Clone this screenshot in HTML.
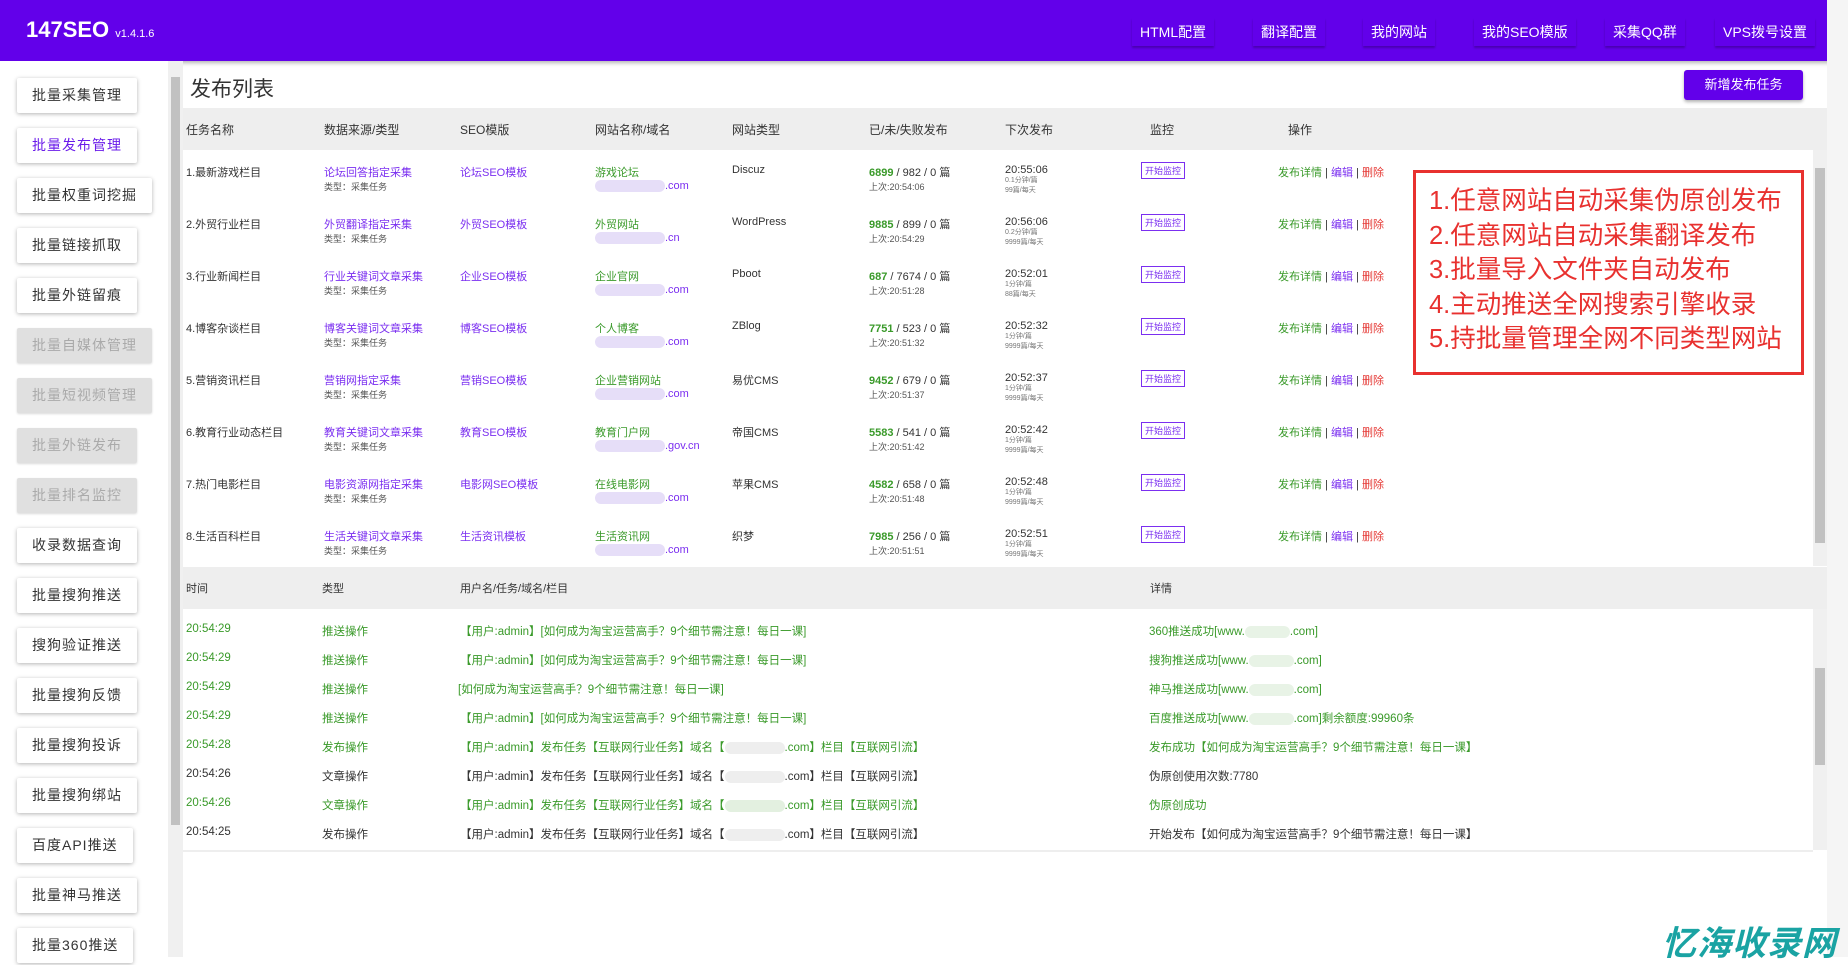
<!DOCTYPE html>
<html><head><meta charset="utf-8">
<style>
*{margin:0;padding:0;box-sizing:border-box}
body{width:1848px;height:957px;overflow:hidden;background:#fff;font-family:"Liberation Sans","Noto Sans CJK SC",sans-serif;font-size:12px;color:#333;position:relative}
.hdr{position:absolute;left:0;top:0;width:1848px;height:61px;background:#6200ea;box-shadow:0 2px 4px rgba(0,0,0,.3)}
.logo{position:absolute;left:26px;top:17px;color:#fff;font-size:22px;font-weight:bold}
.logo small{font-size:11px;font-weight:normal}
.nav{position:absolute;top:18px;color:#fff;font-size:14px;padding:4px 8px;box-shadow:0 2px 2px rgba(0,0,0,.25)}
.side{position:absolute;left:0;top:61px;width:168px;height:896px;background:#fff}
.sb{position:absolute;left:17px;height:35px;line-height:35px;padding:0 15px;background:#fff;box-shadow:0 1px 4px rgba(0,0,0,.3);border-radius:2px;font-size:14px;letter-spacing:1px;color:#333}
.sb.dis{background:#e0e0e0;color:#aaa;box-shadow:0 1px 2px rgba(0,0,0,.15)}
.sb.act{color:#6a1bea}
.vs{position:absolute;background:#f0f0f0}
.thumb{position:absolute;background:#c1c1c1}
.title{position:absolute;left:190px;top:73px;font-size:21px;color:#333}
.newbtn{position:absolute;left:1684px;top:70px;width:119px;height:30px;background:#6200ea;color:#fff;font-size:13px;line-height:30px;text-align:center;border-radius:3px;box-shadow:0 2px 3px rgba(0,0,0,.3)}
.band{position:absolute;left:183px;width:1644px;background:#eee}
.th{position:absolute;font-size:12px;color:#333}
.row{position:absolute;left:183px;width:1630px;height:52px}
.c{position:absolute;font-size:11px;white-space:nowrap}
.p{color:#7b2ff0}.g{color:#3a9a2a}.r{color:#e53935}
.s{font-size:9px;color:#555}
.xs{font-size:7px;color:#777;line-height:10px}
.blur{display:inline-block;width:70px;height:12px;background:#e6def8;vertical-align:middle;border-radius:6px}
.mon{position:absolute;left:958px;top:-2px;border:1px solid #7b2ff0;color:#7b2ff0;font-size:9px;padding:1px 3px}
.lr{position:absolute;left:183px;width:1630px;height:29px;font-size:11.5px}
.lr span{position:absolute;top:0;white-space:nowrap}
.red{position:absolute;left:1413px;top:170px;width:391px;height:205px;border:3px solid #e8312f;background:#fff;padding:11px 0 0 13px;color:#e8312f;font-size:25.5px;line-height:34.5px;white-space:nowrap}
.wm{position:absolute;left:1662px;top:916px;font-size:34px;font-weight:bold;font-style:italic;color:#1aa3a3;letter-spacing:1px}
</style></head><body>
<div class="hdr">
<div class="logo">147SEO <small>v1.4.1.6</small></div>
<div class="nav" style="left:1132px">HTML配置</div>
<div class="nav" style="left:1253px">翻译配置</div>
<div class="nav" style="left:1363px">我的网站</div>
<div class="nav" style="left:1474px">我的SEO模版</div>
<div class="nav" style="left:1605px">采集QQ群</div>
<div class="nav" style="left:1715px">VPS拨号设置</div>
</div>
<div class="side">
<div class="sb" style="top:17px">批量采集管理</div>
<div class="sb act" style="top:67px">批量发布管理</div>
<div class="sb" style="top:117px">批量权重词挖掘</div>
<div class="sb" style="top:167px">批量链接抓取</div>
<div class="sb" style="top:217px">批量外链留痕</div>
<div class="sb dis" style="top:267px">批量自媒体管理</div>
<div class="sb dis" style="top:317px">批量短视频管理</div>
<div class="sb dis" style="top:367px">批量外链发布</div>
<div class="sb dis" style="top:417px">批量排名监控</div>
<div class="sb" style="top:467px">收录数据查询</div>
<div class="sb" style="top:517px">批量搜狗推送</div>
<div class="sb" style="top:567px">搜狗验证推送</div>
<div class="sb" style="top:617px">批量搜狗反馈</div>
<div class="sb" style="top:667px">批量搜狗投诉</div>
<div class="sb" style="top:717px">批量搜狗绑站</div>
<div class="sb" style="top:767px">百度API推送</div>
<div class="sb" style="top:817px">批量神马推送</div>
<div class="sb" style="top:867px">批量360推送</div>
</div>
<div class="vs" style="left:168px;top:61px;width:15px;height:896px"></div>
<div class="thumb" style="left:171px;top:77px;width:9px;height:748px"></div>
<div class="vs" style="left:1827px;top:0;width:21px;height:957px;background:#f5f5f5"></div>
<div class="title">发布列表</div>
<div class="newbtn">新增发布任务</div>
<div class="band" style="top:108px;height:42px"></div>
<div class="th" style="left:186px;top:121px">任务名称</div>
<div class="th" style="left:324px;top:121px">数据来源/类型</div>
<div class="th" style="left:460px;top:121px">SEO模版</div>
<div class="th" style="left:595px;top:121px">网站名称/域名</div>
<div class="th" style="left:732px;top:121px">网站类型</div>
<div class="th" style="left:869px;top:121px">已/未/失败发布</div>
<div class="th" style="left:1005px;top:121px">下次发布</div>
<div class="th" style="left:1150px;top:121px">监控</div>
<div class="th" style="left:1288px;top:121px">操作</div>
<div class="vs" style="left:1813px;top:150px;width:14px;height:416px"></div>
<div class="thumb" style="left:1815px;top:168px;width:10px;height:375px"></div>

<div class="row" style="top:164px"><div class="c" style="left:3px">1.最新游戏栏目</div><div class="c p" style="left:141px">论坛回答指定采集<br><span class="s">类型：采集任务</span></div><div class="c p" style="left:277px">论坛SEO模板</div><div class="c g" style="left:412px">游戏论坛<br><span class="blur"></span><span class="p">.com</span></div><div class="c" style="left:549px">Discuz</div><div class="c" style="left:686px"><b class="g">6899</b> / 982 / 0 篇<br><span class="s">上次:20:54:06</span></div><div class="c" style="left:822px">20:55:06<div class="xs">0.1分钟/篇<br>99篇/每天</div></div><div class="mon">开始监控</div><div class="c" style="left:1095px"><span class="g">发布详情</span> | <span class="p">编辑</span> | <span class="r">删除</span></div></div>
<div class="row" style="top:216px"><div class="c" style="left:3px">2.外贸行业栏目</div><div class="c p" style="left:141px">外贸翻译指定采集<br><span class="s">类型：采集任务</span></div><div class="c p" style="left:277px">外贸SEO模板</div><div class="c g" style="left:412px">外贸网站<br><span class="blur"></span><span class="p">.cn</span></div><div class="c" style="left:549px">WordPress</div><div class="c" style="left:686px"><b class="g">9885</b> / 899 / 0 篇<br><span class="s">上次:20:54:29</span></div><div class="c" style="left:822px">20:56:06<div class="xs">0.2分钟/篇<br>9999篇/每天</div></div><div class="mon">开始监控</div><div class="c" style="left:1095px"><span class="g">发布详情</span> | <span class="p">编辑</span> | <span class="r">删除</span></div></div>
<div class="row" style="top:268px"><div class="c" style="left:3px">3.行业新闻栏目</div><div class="c p" style="left:141px">行业关键词文章采集<br><span class="s">类型：采集任务</span></div><div class="c p" style="left:277px">企业SEO模板</div><div class="c g" style="left:412px">企业官网<br><span class="blur"></span><span class="p">.com</span></div><div class="c" style="left:549px">Pboot</div><div class="c" style="left:686px"><b class="g">687</b> / 7674 / 0 篇<br><span class="s">上次:20:51:28</span></div><div class="c" style="left:822px">20:52:01<div class="xs">1分钟/篇<br>88篇/每天</div></div><div class="mon">开始监控</div><div class="c" style="left:1095px"><span class="g">发布详情</span> | <span class="p">编辑</span> | <span class="r">删除</span></div></div>
<div class="row" style="top:320px"><div class="c" style="left:3px">4.博客杂谈栏目</div><div class="c p" style="left:141px">博客关键词文章采集<br><span class="s">类型：采集任务</span></div><div class="c p" style="left:277px">博客SEO模板</div><div class="c g" style="left:412px">个人博客<br><span class="blur"></span><span class="p">.com</span></div><div class="c" style="left:549px">ZBlog</div><div class="c" style="left:686px"><b class="g">7751</b> / 523 / 0 篇<br><span class="s">上次:20:51:32</span></div><div class="c" style="left:822px">20:52:32<div class="xs">1分钟/篇<br>9999篇/每天</div></div><div class="mon">开始监控</div><div class="c" style="left:1095px"><span class="g">发布详情</span> | <span class="p">编辑</span> | <span class="r">删除</span></div></div>
<div class="row" style="top:372px"><div class="c" style="left:3px">5.营销资讯栏目</div><div class="c p" style="left:141px">营销网指定采集<br><span class="s">类型：采集任务</span></div><div class="c p" style="left:277px">营销SEO模板</div><div class="c g" style="left:412px">企业营销网站<br><span class="blur"></span><span class="p">.com</span></div><div class="c" style="left:549px">易优CMS</div><div class="c" style="left:686px"><b class="g">9452</b> / 679 / 0 篇<br><span class="s">上次:20:51:37</span></div><div class="c" style="left:822px">20:52:37<div class="xs">1分钟/篇<br>9999篇/每天</div></div><div class="mon">开始监控</div><div class="c" style="left:1095px"><span class="g">发布详情</span> | <span class="p">编辑</span> | <span class="r">删除</span></div></div>
<div class="row" style="top:424px"><div class="c" style="left:3px">6.教育行业动态栏目</div><div class="c p" style="left:141px">教育关键词文章采集<br><span class="s">类型：采集任务</span></div><div class="c p" style="left:277px">教育SEO模板</div><div class="c g" style="left:412px">教育门户网<br><span class="blur"></span><span class="p">.gov.cn</span></div><div class="c" style="left:549px">帝国CMS</div><div class="c" style="left:686px"><b class="g">5583</b> / 541 / 0 篇<br><span class="s">上次:20:51:42</span></div><div class="c" style="left:822px">20:52:42<div class="xs">1分钟/篇<br>9999篇/每天</div></div><div class="mon">开始监控</div><div class="c" style="left:1095px"><span class="g">发布详情</span> | <span class="p">编辑</span> | <span class="r">删除</span></div></div>
<div class="row" style="top:476px"><div class="c" style="left:3px">7.热门电影栏目</div><div class="c p" style="left:141px">电影资源网指定采集<br><span class="s">类型：采集任务</span></div><div class="c p" style="left:277px">电影网SEO模板</div><div class="c g" style="left:412px">在线电影网<br><span class="blur"></span><span class="p">.com</span></div><div class="c" style="left:549px">苹果CMS</div><div class="c" style="left:686px"><b class="g">4582</b> / 658 / 0 篇<br><span class="s">上次:20:51:48</span></div><div class="c" style="left:822px">20:52:48<div class="xs">1分钟/篇<br>9999篇/每天</div></div><div class="mon">开始监控</div><div class="c" style="left:1095px"><span class="g">发布详情</span> | <span class="p">编辑</span> | <span class="r">删除</span></div></div>
<div class="row" style="top:528px"><div class="c" style="left:3px">8.生活百科栏目</div><div class="c p" style="left:141px">生活关键词文章采集<br><span class="s">类型：采集任务</span></div><div class="c p" style="left:277px">生活资讯模板</div><div class="c g" style="left:412px">生活资讯网<br><span class="blur"></span><span class="p">.com</span></div><div class="c" style="left:549px">织梦</div><div class="c" style="left:686px"><b class="g">7985</b> / 256 / 0 篇<br><span class="s">上次:20:51:51</span></div><div class="c" style="left:822px">20:52:51<div class="xs">1分钟/篇<br>9999篇/每天</div></div><div class="mon">开始监控</div><div class="c" style="left:1095px"><span class="g">发布详情</span> | <span class="p">编辑</span> | <span class="r">删除</span></div></div>

<div class="red">1.任意网站自动采集伪原创发布<br>2.任意网站自动采集翻译发布<br>3.批量导入文件夹自动发布<br>4.主动推送全网搜索引擎收录<br>5.持批量管理全网不同类型网站</div>

<div class="band" style="top:567px;height:42px"></div>
<div class="th" style="left:186px;top:580px;font-size:11px">时间</div>
<div class="th" style="left:322px;top:580px;font-size:11px">类型</div>
<div class="th" style="left:460px;top:580px;font-size:11px">用户名/任务/域名/栏目</div>
<div class="th" style="left:1150px;top:580px;font-size:11px">详情</div>
<div class="vs" style="left:1813px;top:609px;width:14px;height:241px"></div>
<div class="thumb" style="left:1815px;top:668px;width:10px;height:97px"></div>
<div style="position:absolute;left:183px;top:850px;width:1630px;height:2px;background:#eee"></div>

<div class="lr g" style="top:623px"><span style="left:3px">20:54:29</span><span style="left:139px">推送操作</span><span style="left:277px">【用户:admin】[如何成为淘宝运营高手？9个细节需注意！每日一课]</span><span style="left:966px">360推送成功[www.<span class="blur" style="position:static;width:45px;background:#e8f3e6"></span>.com]</span></div>
<div class="lr g" style="top:652px"><span style="left:3px">20:54:29</span><span style="left:139px">推送操作</span><span style="left:277px">【用户:admin】[如何成为淘宝运营高手？9个细节需注意！每日一课]</span><span style="left:966px">搜狗推送成功[www.<span class="blur" style="position:static;width:45px;background:#e8f3e6"></span>.com]</span></div>
<div class="lr g" style="top:681px"><span style="left:3px">20:54:29</span><span style="left:139px">推送操作</span><span style="left:275px">[如何成为淘宝运营高手？9个细节需注意！每日一课]</span><span style="left:966px">神马推送成功[www.<span class="blur" style="position:static;width:45px;background:#e8f3e6"></span>.com]</span></div>
<div class="lr g" style="top:710px"><span style="left:3px">20:54:29</span><span style="left:139px">推送操作</span><span style="left:277px">【用户:admin】[如何成为淘宝运营高手？9个细节需注意！每日一课]</span><span style="left:966px">百度推送成功[www.<span class="blur" style="position:static;width:45px;background:#e8f3e6"></span>.com]剩余额度:99960条</span></div>
<div class="lr g" style="top:739px"><span style="left:3px">20:54:28</span><span style="left:139px">发布操作</span><span style="left:277px">【用户:admin】发布任务【互联网行业任务】域名【<span class="blur" style="position:static;width:60px;background:#eee"></span>.com】栏目【互联网引流】</span><span style="left:966px">发布成功【如何成为淘宝运营高手？9个细节需注意！每日一课】</span></div>
<div class="lr" style="top:768px"><span style="left:3px">20:54:26</span><span style="left:139px">文章操作</span><span style="left:277px">【用户:admin】发布任务【互联网行业任务】域名【<span class="blur" style="position:static;width:60px;background:#eee"></span>.com】栏目【互联网引流】</span><span style="left:966px">伪原创使用次数:7780</span></div>
<div class="lr g" style="top:797px"><span style="left:3px">20:54:26</span><span style="left:139px">文章操作</span><span style="left:277px">【用户:admin】发布任务【互联网行业任务】域名【<span class="blur" style="position:static;width:60px;background:#e3f0e0"></span>.com】栏目【互联网引流】</span><span style="left:966px">伪原创成功</span></div>
<div class="lr" style="top:826px"><span style="left:3px">20:54:25</span><span style="left:139px">发布操作</span><span style="left:277px">【用户:admin】发布任务【互联网行业任务】域名【<span class="blur" style="position:static;width:60px;background:#eee"></span>.com】栏目【互联网引流】</span><span style="left:966px">开始发布【如何成为淘宝运营高手？9个细节需注意！每日一课】</span></div>

<div class="wm">忆海收录网</div>
</body></html>
